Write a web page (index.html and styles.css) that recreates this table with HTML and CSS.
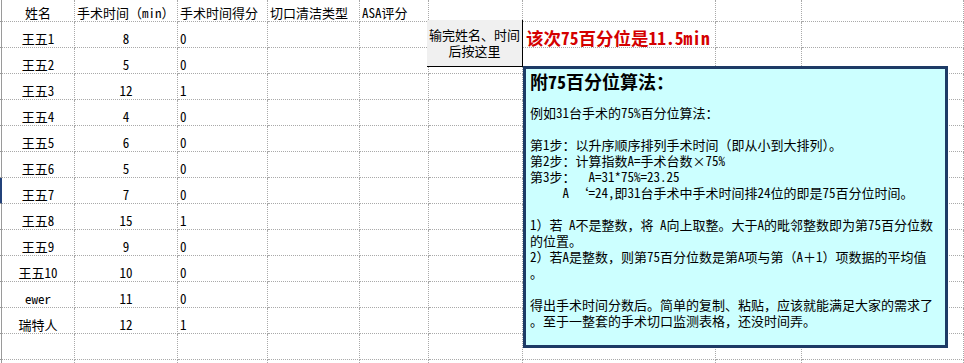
FILE: index.html
```html
<!DOCTYPE html>
<html lang="zh-CN">
<head>
<meta charset="utf-8">
<title>手术时间75百分位</title>
<link rel="stylesheet" href="styles.css">
</head>
<body>
<div class="sheet">
  <div class="row head">
    <div class="c g"></div><div class="c ctr">姓名</div><div class="c">手术时间（min）</div><div class="c">手术时间得分</div><div class="c">切口清洁类型</div><div class="c">ASA评分</div><div class="c"></div><div class="c"></div><div class="c"></div><div class="c"></div>
  </div>
  <div class="row">
    <div class="c g"></div><div class="c ctr">王五1</div><div class="c ctr">8</div><div class="c">0</div><div class="c"></div><div class="c"></div><div class="c"></div><div class="c red">该次75百分位是11.5min</div><div class="c"></div><div class="c"></div>
  </div>
  <div class="row">
    <div class="c g"></div><div class="c ctr">王五2</div><div class="c ctr">5</div><div class="c">0</div><div class="c"></div><div class="c"></div><div class="c"></div><div class="c"></div><div class="c"></div><div class="c"></div>
  </div>
  <div class="row">
    <div class="c g"></div><div class="c ctr">王五3</div><div class="c ctr">12</div><div class="c">1</div><div class="c"></div><div class="c"></div><div class="c"></div><div class="c"></div><div class="c"></div><div class="c"></div>
  </div>
  <div class="row">
    <div class="c g"></div><div class="c ctr">王五4</div><div class="c ctr">4</div><div class="c">0</div><div class="c"></div><div class="c"></div><div class="c"></div><div class="c"></div><div class="c"></div><div class="c"></div>
  </div>
  <div class="row">
    <div class="c g"></div><div class="c ctr">王五5</div><div class="c ctr">6</div><div class="c">0</div><div class="c"></div><div class="c"></div><div class="c"></div><div class="c"></div><div class="c"></div><div class="c"></div>
  </div>
  <div class="row">
    <div class="c g"></div><div class="c ctr">王五6</div><div class="c ctr">5</div><div class="c">0</div><div class="c"></div><div class="c"></div><div class="c"></div><div class="c"></div><div class="c"></div><div class="c"></div>
  </div>
  <div class="row">
    <div class="c g sel"></div><div class="c ctr">王五7</div><div class="c ctr">7</div><div class="c">0</div><div class="c"></div><div class="c"></div><div class="c"></div><div class="c"></div><div class="c"></div><div class="c"></div>
  </div>
  <div class="row">
    <div class="c g"></div><div class="c ctr">王五8</div><div class="c ctr">15</div><div class="c">1</div><div class="c"></div><div class="c"></div><div class="c"></div><div class="c"></div><div class="c"></div><div class="c"></div>
  </div>
  <div class="row">
    <div class="c g"></div><div class="c ctr">王五9</div><div class="c ctr">9</div><div class="c">0</div><div class="c"></div><div class="c"></div><div class="c"></div><div class="c"></div><div class="c"></div><div class="c"></div>
  </div>
  <div class="row">
    <div class="c g"></div><div class="c ctr">王五10</div><div class="c ctr">10</div><div class="c">0</div><div class="c"></div><div class="c"></div><div class="c"></div><div class="c"></div><div class="c"></div><div class="c"></div>
  </div>
  <div class="row">
    <div class="c g"></div><div class="c ctr">ewer</div><div class="c ctr">11</div><div class="c">0</div><div class="c"></div><div class="c"></div><div class="c"></div><div class="c"></div><div class="c"></div><div class="c"></div>
  </div>
  <div class="row">
    <div class="c g"></div><div class="c ctr">瑞特人</div><div class="c ctr">12</div><div class="c">1</div><div class="c"></div><div class="c"></div><div class="c"></div><div class="c"></div><div class="c"></div><div class="c"></div>
  </div>
  <div class="row">
    <div class="c g"></div><div class="c"></div><div class="c"></div><div class="c"></div><div class="c"></div><div class="c"></div><div class="c"></div><div class="c"></div><div class="c"></div><div class="c"></div>
  </div>
  <div class="row tail">
    <div class="c g"></div><div class="c"></div><div class="c"></div><div class="c"></div><div class="c"></div><div class="c"></div><div class="c"></div><div class="c"></div><div class="c"></div><div class="c"></div>
  </div>

  <div class="btn">输完姓名、时间
后按这里</div>

  <div class="note">
    <div class="note-title">附75百分位算法：</div>
    <div class="note-body">例如31台手术的75%百分位算法：

第1步：以升序顺序排列手术时间（即从小到大排列）。
第2步：计算指数A=手术台数×75%
第3步：  A=31*75%=23.25
     A ‘=24,即31台手术中手术时间排24位的即是75百分位时间。

1）若 A不是整数，将 A向上取整。大于A的毗邻整数即为第75百分位数
的位置。
2）若A是整数，则第75百分位数是第A项与第（A＋1）项数据的平均值
。

得出手术时间分数后。简单的复制、粘贴，应该就能满足大家的需求了
。至于一整套的手术切口监测表格，还没时间弄。</div>
  </div>
</div>
</body>
</html>
```

FILE: styles.css
```css
html, body {
  margin: 0;
  padding: 0;
}
body {
  width: 964px;
  height: 363px;
  overflow: hidden;
  background: #ffffff;
  color: #000000;
  font-family: "Noto Sans Mono CJK SC", "Noto Sans CJK SC", sans-serif;
  font-size: 13px;
}
.sheet {
  position: relative;
  width: 964px;
}
.row {
  display: grid;
  grid-template-columns: 2px 73px 103px 90px 92px 69px 94px 193px 86px 1fr;
  height: 26px;
}
.row.head {
  height: 22px;
}
.row.tail {
  height: 3px;
}
.c {
  box-sizing: border-box;
  border-right: 1px dotted #a9a9a9;
  border-bottom: 1px dotted #a9a9a9;
  display: flex;
  align-items: flex-end;
  padding: 0 2px 1px 2px;
  line-height: 14px;
  white-space: nowrap;
  min-width: 0;
}
.row.tail .c {
  border-bottom: none;
  padding: 0;
}
.c.g {
  padding: 0;
  border-right: 1px solid #9a9a9a;
  border-bottom: 1px solid #9a9a9a;
}
.c.g.sel {
  background: #23427a;
  border-right-color: #23427a;
}
.ctr {
  justify-content: center;
}
.red {
  color: #d40000;
  font-weight: bold;
  font-size: 17.5px;
  line-height: 18px;
  padding: 0 0 0 3px;
  overflow: visible;
}
.btn {
  position: absolute;
  left: 427px;
  top: 20px;
  width: 95px;
  height: 46px;
  box-sizing: content-box;
  background: #f0f0f0;
  border-right: 1px solid #000000;
  border-bottom: 1px solid #000000;
  padding-top: 7px;
  height: 39px;
  text-align: center;
  line-height: 16px;
  white-space: pre;
}
.note {
  position: absolute;
  left: 523px;
  top: 66px;
  width: 425px;
  height: 282px;
  box-sizing: border-box;
  border: 3px solid #1d3b66;
  background: #ccffff;
  padding: 1px 4px 0 4px;
}
.note-title {
  font-size: 18px;
  font-weight: bold;
  line-height: 22px;
  white-space: nowrap;
}
.note-body {
  margin-top: 13px;
  line-height: 16px;
  white-space: pre;
}
```
